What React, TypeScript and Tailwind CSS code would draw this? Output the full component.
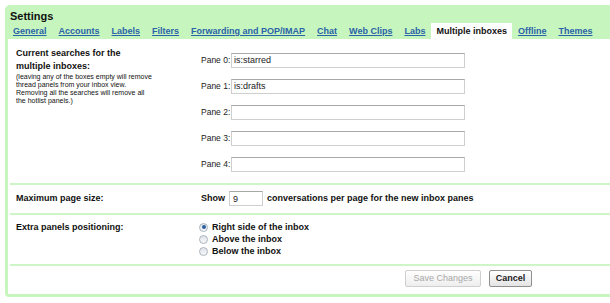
const font = "font-['Liberation_Sans',Arial,sans-serif]";

const tabs = [
  'General',
  'Accounts',
  'Labels',
  'Filters',
  'Forwarding and POP/IMAP',
  'Chat',
  'Web Clips',
  'Labs',
  'Multiple inboxes',
  'Offline',
  'Themes',
];

const panes = ['is:starred', 'is:drafts', '', '', ''];

const Divider = () => <div className="mx-[2px] h-[2px] bg-[#cdf5c6]" />;

const Radio = ({ checked, label }: { checked?: boolean; label: string }) => (
  <div className="flex h-[12px] items-center gap-[4px]">
    <span className="flex h-[9px] w-[9px] items-center justify-center rounded-full border border-[#a9b3bd] bg-gradient-to-b from-[#dfe4ea] to-[#f7f8fa]">
      {checked && <span className="h-[4px] w-[4px] rounded-full bg-[#2d5f9c]" />}
    </span>
    <span className="whitespace-nowrap text-[9px] font-bold leading-[12px] text-[#111]">{label}</span>
  </div>
);

export default function App() {
  return (
    <div className={`h-[303px] w-[610px] overflow-hidden bg-white pl-[5px] pt-[5px] ${font}`}>
      <div className="w-[612px] rounded-tl-[5px] rounded-bl-[4px] bg-[#c6f6be] pb-[3px] pl-[3px] pr-[3px]">
        {/* header */}
        <div className="pl-[2px] pt-[4px]">
          <div className="h-[14px] text-[11px] font-bold leading-[14px] text-[#111]">Settings</div>
          <div className="-ml-[3px] flex h-[16px] items-end whitespace-nowrap">
            {tabs.map((t) =>
              t === 'Multiple inboxes' ? (
                <span key={t} className="h-[16px] bg-white px-[5px] text-[9px] font-bold leading-[17px] text-[#111]">
                  {t}
                </span>
              ) : (
                <span key={t} className="h-[16px] px-[6px] text-[9px] font-bold leading-[17px] text-[#2b62a8] underline">
                  {t}
                </span>
              )
            )}
          </div>
        </div>

        {/* content */}
        <div className="bg-white">
          <div className="flex pb-[6px] pt-[8px]">
            <div className="w-[190px] pl-[8px] text-[#111]">
              <div className="text-[9px] font-bold leading-[13px]">
                Current searches for the
                <br />
                multiple inboxes:
              </div>
              <div className="whitespace-nowrap text-[7px] leading-[8px]">
                (leaving any of the boxes empty will remove
                <br />
                thread panels from your inbox view.
                <br />
                Removing all the searches will remove all
                <br />
                the hotlist panels.)
              </div>
            </div>
            <div className="flex flex-col">
              {panes.map((v, i) => (
                <div key={i} className="flex h-[26px] items-center">
                  <span className="w-[33px] whitespace-nowrap pl-[3px] text-[8.5px] leading-[13px] text-[#222]">Pane {i}:</span>
                  <input
                    readOnly
                    value={v}
                    className="h-[15px] w-[234px] border border-[#cfcfcf] border-t-[#a8a8a8] px-[2px] text-[9px] text-[#222] outline-none"
                  />
                </div>
              ))}
            </div>
          </div>
          <Divider />

          <div className="flex pb-[7px] pt-[6px]">
            <div className="flex w-[190px] items-center pl-[8px] text-[9px] font-bold text-[#111]">Maximum page size:</div>
            <div className="flex items-center whitespace-nowrap pl-[3px] text-[9px] font-bold text-[#111]">
              <span>Show</span>
              <input
                readOnly
                value="9"
                className="mx-[4px] h-[15px] w-[34px] border border-[#cfcfcf] border-t-[#a8a8a8] px-[3px] text-[9px] font-normal text-[#222] outline-none"
              />
              <span>conversations per page for the new inbox panes</span>
            </div>
          </div>
          <Divider />

          <div className="flex pb-[7px] pt-[6px]">
            <div className="w-[190px] pl-[8px] text-[9px] font-bold leading-[12px] text-[#111]">Extra panels positioning:</div>
            <div className="flex flex-col pl-[1px]">
              <Radio checked label="Right side of the inbox" />
              <Radio label="Above the inbox" />
              <Radio label="Below the inbox" />
            </div>
          </div>
          <Divider />

          <div className="flex justify-end gap-[8px] pb-[7px] pr-[82px] pt-[4px]">
            <button className="h-[17px] w-[76px] whitespace-nowrap rounded-[2px] border border-[#cfcfcf] bg-gradient-to-b from-white to-[#eeeeee] text-[9px] leading-[15px] text-[#a8a8a8]">
              Save Changes
            </button>
            <button className="h-[17px] w-[43px] rounded-[2px] border border-[#8f8f8f] bg-gradient-to-b from-white to-[#e4e4e4] text-[9px] font-bold leading-[15px] text-[#222]">
              Cancel
            </button>
          </div>
        </div>
      </div>
    </div>
  );
}
